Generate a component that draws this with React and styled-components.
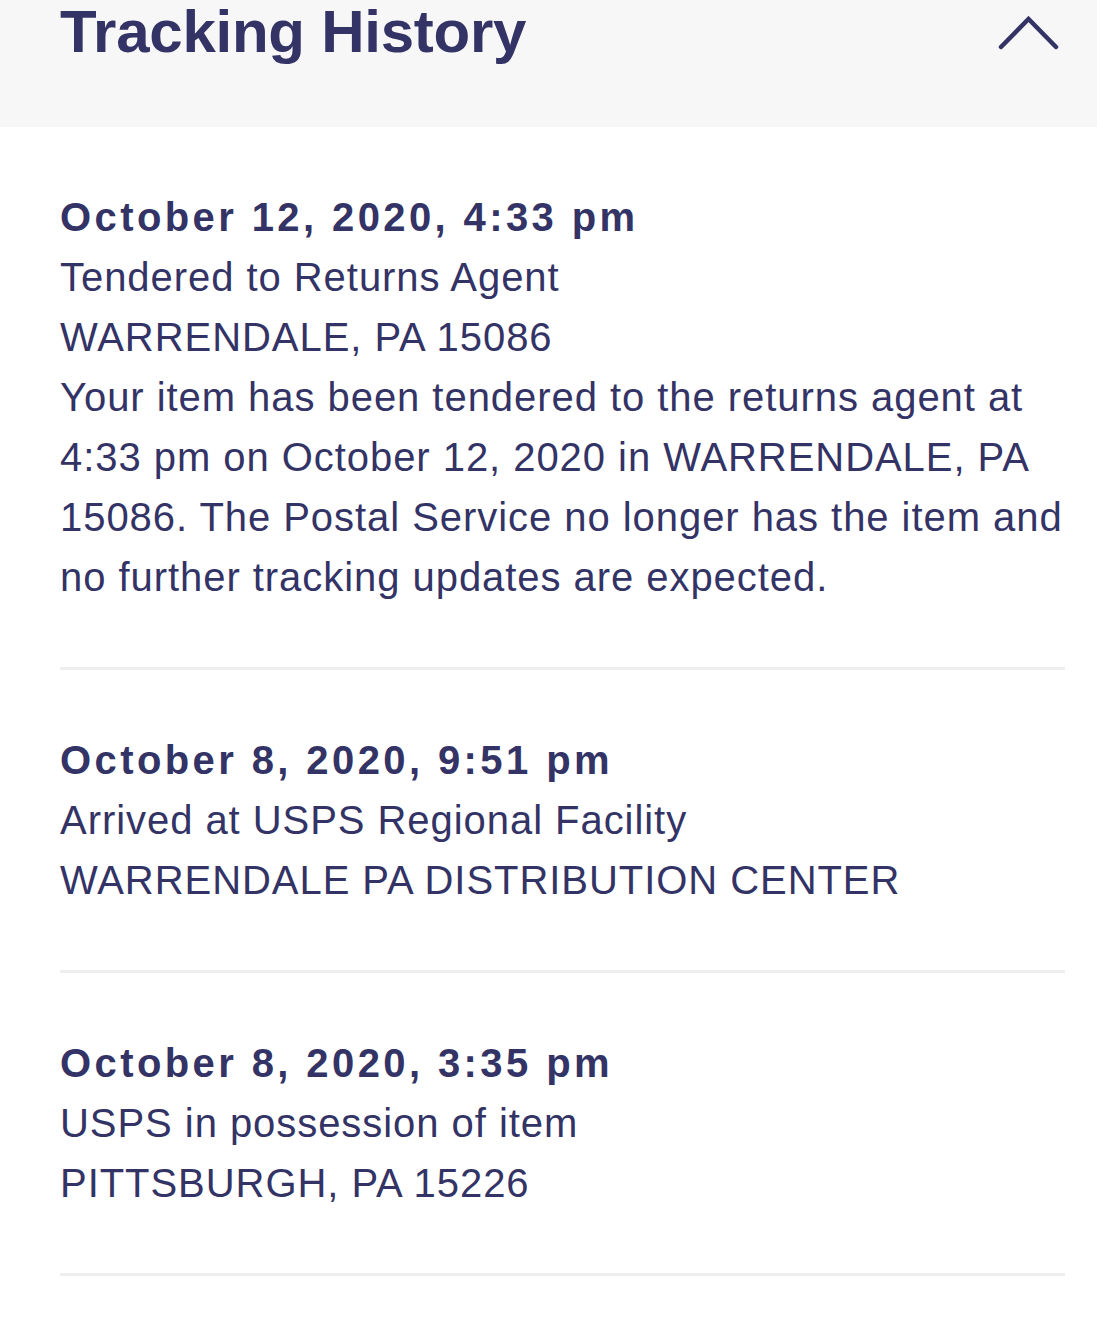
import React from "react";
import styled, { createGlobalStyle } from "styled-components";

const GlobalStyle = createGlobalStyle`
  body {
    margin: 0;
    background: #ffffff;
    font-family: "Liberation Sans", Arial, sans-serif;
    color: #333366;
  }
`;

const events = [
  {
    date: "October 12, 2020, 4:33 pm",
    status: "Tendered to Returns Agent",
    place: "WARRENDALE, PA 15086",
    note:
      "Your item has been tendered to the returns agent at 4:33 pm on October 12, 2020 in WARRENDALE, PA 15086. The Postal Service no longer has the item and no further tracking updates are expected.",
  },
  {
    date: "October 8, 2020, 9:51 pm",
    status: "Arrived at USPS Regional Facility",
    place: "WARRENDALE PA DISTRIBUTION CENTER",
  },
  {
    date: "October 8, 2020, 3:35 pm",
    status: "USPS in possession of item",
    place: "PITTSBURGH, PA 15226",
  },
];

export default function App() {
  return (
    <Page>
      <GlobalStyle />
      <Header>
        <Title>Tracking History</Title>
        <Toggle aria-label="Collapse">
          <svg width="62" height="40" viewBox="0 0 62 40" fill="none">
            <path
              d="M3 31 L30.5 3 L58 31"
              stroke="#333366"
              strokeWidth="4.5"
              strokeLinecap="round"
              strokeLinejoin="miter"
            />
          </svg>
        </Toggle>
      </Header>
      <List>
        {events.map((ev) => (
          <Item key={ev.date}>
            <Date>{ev.date}</Date>
            <Line>{ev.status}</Line>
            <Line>{ev.place}</Line>
            {ev.note && <Line>{ev.note}</Line>}
          </Item>
        ))}
      </List>
    </Page>
  );
}

const Page = styled.div`
  width: 100%;
  min-height: 1344px;
  background: #ffffff;
`;

const Header = styled.div`
  display: flex;
  align-items: flex-start;
  justify-content: space-between;
  height: 127px;
  box-sizing: border-box;
  padding: 2px 37px 0 60px;
  background: #f7f7f7;
`;

const Title = styled.h2`
  margin: 0;
  font-size: 60px;
  line-height: 60px;
  font-weight: 700;
  letter-spacing: -0.25px;
  color: #333366;
`;

const Toggle = styled.button`
  display: flex;
  margin: 14px 0 0;
  padding: 0;
  border: none;
  background: none;
`;

const List = styled.ul`
  list-style: none;
  margin: 0;
  padding: 0 32px 0 60px;
`;

const Item = styled.li`
  padding: 60px 0 60px;
  border-bottom: 3px solid #eeeeee;
`;

const Date = styled.div`
  font-size: 40px;
  line-height: 60px;
  font-weight: 700;
  letter-spacing: 3.4px;
  color: #333366;
`;

const Line = styled.div`
  font-size: 40px;
  line-height: 60px;
  font-weight: 400;
  letter-spacing: 0.95px;
  color: #333366;
`;
